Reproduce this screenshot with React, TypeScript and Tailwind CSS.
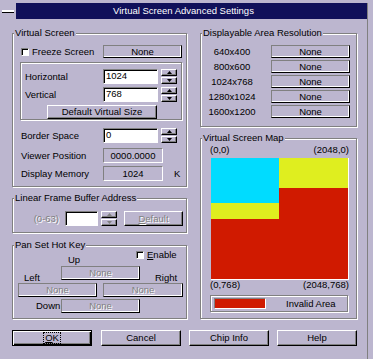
import type { ReactNode } from 'react';

const etched = 'border border-[#808080] shadow-[inset_1px_1px_0_#fff,1px_1px_0_#fff]';
const raised =
  'border border-t-white border-l-white border-r-black border-b-black shadow-[inset_-1px_-1px_0_#808080] bg-[#bcb6cf]';
const sunken = 'border border-t-[#808080] border-l-[#808080] border-r-white border-b-white';
const field = `${sunken} bg-white shadow-[inset_1px_1px_0_#000]`;
const noneBox =
  'border border-t-[#808080] border-l-[#808080] border-r-black border-b-black shadow-[inset_-1px_-1px_0_#fff] flex items-center justify-center';
const disabled = 'text-[#808080] [text-shadow:1px_1px_0_#fff]';

function Group({ label, className, children }: { label: string; className: string; children: ReactNode }) {
  return (
    <div className={`relative ${etched} ${className}`}>
      <span className="absolute -top-[7px] left-[1px] bg-[#bcb6cf] px-[1px] leading-[12px]">{label}</span>
      {children}
    </div>
  );
}

function Spinner({ off }: { off?: boolean }) {
  const c = off ? '#808080' : '#000';
  return (
    <div className="flex h-[15px] w-[16px] flex-col">
      <div className={`${raised} flex h-[7px] items-center justify-center`}>
        <svg width="5" height="3" viewBox="0 0 5 3">
          <path d="M2.5 0 L5 3 L0 3 Z" fill={c} />
        </svg>
      </div>
      <div className={`${raised} mt-[1px] flex h-[7px] items-center justify-center`}>
        <svg width="5" height="3" viewBox="0 0 5 3">
          <path d="M0 0 L5 0 L2.5 3 Z" fill={c} />
        </svg>
      </div>
    </div>
  );
}

function Check() {
  return <div className={`${field} h-[8px] w-[8px] shrink-0`} />;
}

function Button({ children, className }: { children: ReactNode; className: string }) {
  return <div className={`${raised} flex items-center justify-center ${className}`}>{children}</div>;
}

const resolutions = ['640x400', '800x600', '1024x768', '1280x1024', '1600x1200'];

export default function App() {
  return (
    <div className="h-[359px] w-[373px] overflow-hidden bg-[#bcb6cf] pt-[3px] font-['Liberation_Sans',Arial,sans-serif] text-[9.5px] leading-[12px] text-black">
      <div className="w-[368px] border-r border-[#808080]">
        {/* title bar */}
        <div className="relative flex h-[16px] items-center bg-[#10105a]">
          <div className="flex h-[16px] w-[16px] items-center justify-center bg-[#bcb6cf]">
            <div className="h-[2px] w-[12px] bg-white shadow-[0_1px_0_#000]" />
          </div>
          <div className="-ml-[16px] flex-1 text-center text-[9.5px] text-white">Virtual Screen Advanced Settings</div>
        </div>

        <div className="pl-[12px] pt-[14px] pb-[14px]">
          <div className="flex">
            {/* left column */}
            <div className="w-[175px]">
              <Group label="Virtual Screen" className="h-[154px]">
                <div className="mt-[11px] flex items-center pl-[8px]">
                  <div className="flex w-[82px] items-center gap-[3px]">
                    <Check />
                    <span>Freeze Screen</span>
                  </div>
                  <div className={`${noneBox} h-[13px] w-[79px]`}>None</div>
                </div>

                <div className={`${etched} ml-[7px] mt-[4px] h-[58px] w-[162px]`}>
                  <div className="mt-[6px] flex items-center pl-[4px]">
                    <span className="w-[78px]">Horizontal</span>
                    <div className={`${field} h-[15px] w-[55px] pl-[2px]`}>1024</div>
                    <div className="ml-[3px]">
                      <Spinner />
                    </div>
                  </div>
                  <div className="mt-[3px] flex items-center pl-[4px]">
                    <span className="w-[78px]">Vertical</span>
                    <div className={`${field} h-[15px] w-[55px] pl-[2px]`}>768</div>
                    <div className="ml-[3px]">
                      <Spinner />
                    </div>
                  </div>
                  <Button className="ml-[26px] mt-[3px] h-[14px] w-[110px]">Default Virtual Size</Button>
                </div>

                <div className="mt-[8px] flex items-center pl-[8px]">
                  <span className="w-[82px]">Border Space</span>
                  <div className={`${field} h-[15px] w-[55px] pl-[2px]`}>0</div>
                  <div className="ml-[3px]">
                    <Spinner />
                  </div>
                </div>
                <div className="mt-[5px] flex items-center pl-[8px]">
                  <span className="w-[82px]">Viewer Position</span>
                  <div className={`${sunken} flex h-[15px] w-[60px] items-center justify-center`}>0000.0000</div>
                </div>
                <div className="mt-[3px] flex items-center pl-[8px]">
                  <span className="w-[82px]">Display Memory</span>
                  <div className={`${sunken} flex h-[15px] w-[60px] items-center justify-center`}>1024</div>
                  <span className="ml-[11px]">K</span>
                </div>
              </Group>

              <Group label="Linear Frame Buffer Address" className="mt-[11px] h-[35px]">
                <div className="mt-[12px] flex items-center">
                  <span className={`w-[52px] pr-[6px] text-right ${disabled}`}>(0-63)</span>
                  <div className={`${field} h-[15px] w-[33px]`} />
                  <div className="ml-[3px]">
                    <Spinner off />
                  </div>
                  <Button className="ml-[7px] h-[15px] w-[59px]">
                    <span className={disabled}>
                      <u>D</u>efault
                    </span>
                  </Button>
                </div>
              </Group>

              <Group label="Pan Set Hot Key" className="mt-[12px] h-[74px]">
                <div className="flex h-[20px] items-start">
                  <span className="w-[123px] pl-[55px] pt-[8px]">Up</span>
                  <div className="flex items-center gap-[3px] pt-[3px]">
                    <Check />
                    <span>
                      <u>E</u>nable
                    </span>
                  </div>
                </div>
                <div className="flex h-[14px] items-end">
                  <span className="mb-[-4px] w-[48px] pl-[11px]">Left</span>
                  <div className={`${noneBox} h-[14px] w-[79px] ${disabled}`}>None</div>
                  <span className="mb-[-4px] ml-[15px]">Right</span>
                </div>
                <div className="mt-[3px] flex pl-[5px]">
                  <div className={`${noneBox} h-[14px] w-[79px] ${disabled}`}>None</div>
                  <div className={`${noneBox} ml-[6px] h-[14px] w-[80px] ${disabled}`}>None</div>
                </div>
                <div className="mt-[2px] flex items-center">
                  <span className="w-[48px] pl-[23px]">Down</span>
                  <div className={`${noneBox} h-[14px] w-[79px] ${disabled}`}>None</div>
                </div>
              </Group>
            </div>

            {/* right column */}
            <div className="ml-[13px] w-[157px]">
              <Group label="Displayable Area Resolution" className="h-[94px]">
                <div className="mt-[11px] flex flex-col gap-[2px]">
                  {resolutions.map((r) => (
                    <div key={r} className="flex items-center">
                      <span className="w-[62px] text-center">{r}</span>
                      <div className={`${noneBox} ml-[8px] h-[13px] w-[79px]`}>None</div>
                    </div>
                  ))}
                </div>
              </Group>

              <Group label="Virtual Screen Map" className="mt-[11px] h-[181px]">
                <div className="mt-[5px] flex justify-between pl-[9px] pr-[7px]">
                  <span>(0,0)</span>
                  <span>(2048,0)</span>
                </div>
                <div className="ml-[10px] mt-[2px] flex h-[122px] w-[138px] border-b border-r border-white">
                  <div className="flex w-[68px] flex-col">
                    <div className="h-[45px] bg-[#00dcff]" />
                    <div className="h-[16px] bg-[#dfee1f]" />
                    <div className="flex-1 bg-[#d01a00]" />
                  </div>
                  <div className="flex flex-1 flex-col">
                    <div className="h-[30px] bg-[#dfee1f]" />
                    <div className="flex-1 bg-[#d01a00]" />
                  </div>
                </div>
                <div className="flex justify-between pl-[9px] pr-[7px] leading-[10px]">
                  <span>(0,768)</span>
                  <span>(2048,768)</span>
                </div>
                <div className={`${etched} ml-[9px] mt-[5px] flex h-[17px] w-[138px] items-center`}>
                  <div className={`${sunken} ml-[3px] h-[11px] w-[52px] bg-[#d01a00]`} />
                  <span className="ml-[20px]">Invalid Area</span>
                </div>
              </Group>
            </div>
          </div>

          {/* dialog buttons */}
          <div className="mt-[11px] flex">
            <div className="flex h-[16px] w-[80px] items-center justify-center border border-black bg-[#bcb6cf] shadow-[inset_1px_1px_0_#fff,inset_-1px_-1px_0_#000,inset_-2px_-2px_0_#808080]">
              <span className="border border-dotted border-black px-[1px] leading-[10px]">
                <u>O</u>K
              </span>
            </div>
            <Button className="ml-[9px] h-[16px] w-[80px]">Cancel</Button>
            <Button className="ml-[8px] h-[16px] w-[80px]">Chip Info</Button>
            <Button className="ml-[8px] h-[16px] w-[80px]">Help</Button>
          </div>
        </div>
      </div>
    </div>
  );
}
